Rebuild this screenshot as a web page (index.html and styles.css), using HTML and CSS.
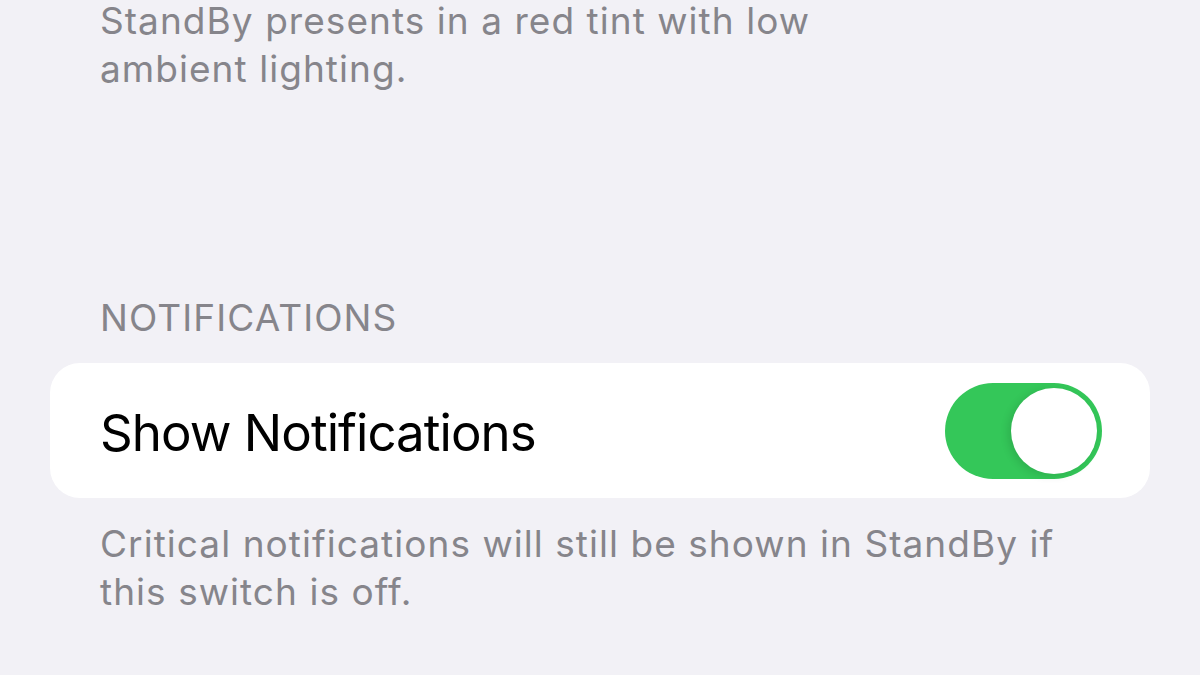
FILE: index.html
```html
<!DOCTYPE html>
<html lang="en">
<head>
  <meta charset="UTF-8" />
  <meta name="viewport" content="width=device-width, initial-scale=1.0" />
  <title>StandBy</title>
  <link rel="stylesheet" href="styles.css">
</head>
<body>
  <div class="settings">
    <p class="footnote top-note">StandBy presents in a red tint with low<br>ambient lighting.</p>

    <h2 class="group-title">NOTIFICATIONS</h2>
    <div class="group">
      <div class="row">
        <span class="row-label">Show Notifications</span>
        <label class="switch">
          <input type="checkbox" checked>
          <span class="track"><span class="knob"></span></span>
        </label>
      </div>
    </div>
    <p class="footnote">Critical notifications will still be shown in StandBy if<br>this switch is off.</p>
  </div>
</body>
</html>
```

FILE: styles.css
```css
body {
  margin: 0;
  background: #f2f1f6;
  font-family: Inter, "Noto Sans", sans-serif;
  overflow: hidden;
}
.settings {
  width: 1200px;
  height: 675px;
  padding: 0 50px;
  box-sizing: border-box;
}
.footnote {
  margin: 0;
  padding-left: 50px;
  font-size: 37px;
  line-height: 48px;
  color: #86858b;
  letter-spacing: 1.05px;
}
.top-note {
  margin-top: -3px;
}
.group-title {
  margin: 201px 0 21px 0;
  padding-left: 50px;
  font-size: 37px;
  line-height: 48px;
  font-weight: 400;
  color: #86858b;
  letter-spacing: 1.1px;
}
.group {
  background: #ffffff;
  border-radius: 30px;
  margin-bottom: 22px;
}
.row {
  height: 135px;
  display: flex;
  align-items: center;
  justify-content: space-between;
  padding: 0 48px 0 50px;
}
.row-label {
  font-size: 51px;
  color: #000;
  letter-spacing: -0.95px;
  margin-top: 3px;
}
.switch input {
  display: none;
}
.track {
  display: block;
  width: 157px;
  height: 96px;
  border-radius: 48px;
  background: #34c759;
  position: relative;
}
.knob {
  position: absolute;
  top: 5px;
  right: 5px;
  width: 86px;
  height: 86px;
  border-radius: 50%;
  background: #fff;
  box-shadow: -3px 2px 8px rgba(0, 0, 0, 0.12);
}
```
